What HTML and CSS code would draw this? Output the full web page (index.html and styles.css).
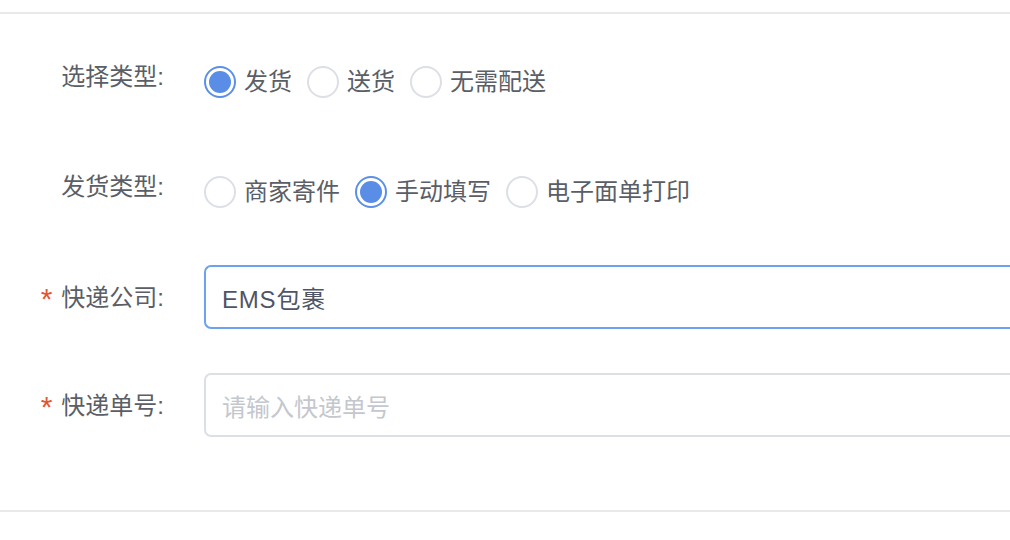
FILE: index.html
```html
<!DOCTYPE html>
<html lang="zh-CN">
<head>
<meta charset="utf-8">
<title>发货</title>
<link rel="stylesheet" href="styles.css">
</head>
<body>
<div class="page">
  <form class="form">
    <div class="form-item radio-row first">
      <label class="form-label">选择类型:</label>
      <div class="radio-group">
        <span class="radio checked"><span class="radio-circle"></span><span class="radio-text">发货</span></span>
        <span class="radio"><span class="radio-circle"></span><span class="radio-text">送货</span></span>
        <span class="radio"><span class="radio-circle"></span><span class="radio-text">无需配送</span></span>
      </div>
    </div>
    <div class="form-item radio-row second">
      <label class="form-label">发货类型:</label>
      <div class="radio-group">
        <span class="radio"><span class="radio-circle"></span><span class="radio-text">商家寄件</span></span>
        <span class="radio checked"><span class="radio-circle"></span><span class="radio-text">手动填写</span></span>
        <span class="radio"><span class="radio-circle"></span><span class="radio-text">电子面单打印</span></span>
      </div>
    </div>
    <div class="form-item input-row">
      <label class="form-label"><span class="required">*</span>快递公司:</label>
      <div class="input focused"><span class="input-value">EMS包裹</span></div>
    </div>
    <div class="form-item input-row last">
      <label class="form-label"><span class="required">*</span>快递单号:</label>
      <div class="input"><span class="input-placeholder">请输入快递单号</span></div>
    </div>
  </form>
</div>
</body>
</html>
```
FILE: styles.css
```css
html, body {
  margin: 0;
  padding: 0;
  background: #ffffff;
  overflow: hidden;
}
body {
  font-family: "Liberation Sans", "Noto Sans CJK SC", sans-serif;
  color: #5a5e66;
  width: 1010px;
  height: 540px;
}
.page {
  margin-top: 12px;
  border-top: 2px solid #e9e9e9;
  border-bottom: 2px solid #e9e9e9;
  height: 496px;
}
.form {
  padding-top: 34px;
}
.form-item {
  display: flex;
  align-items: center;
}
.form-label {
  width: 204px;
  box-sizing: border-box;
  padding-right: 40px;
  text-align: right;
  font-size: 24px;
  line-height: 32px;
  color: #5a5e66;
  flex-shrink: 0;
}
.radio-row {
  height: 68px;
}
.radio-row .form-label {
  padding-bottom: 10px;
}
.radio-row.first {
  margin-bottom: 42px;
}
.radio-row.second {
  margin-bottom: 39px;
}
.radio-group {
  display: flex;
  align-items: center;
}
.radio {
  display: flex;
  align-items: center;
  margin-right: 15px;
}
.radio-circle {
  width: 32px;
  height: 32px;
  box-sizing: border-box;
  border: 2px solid #dcdfe6;
  border-radius: 50%;
  margin-right: 8px;
  position: relative;
  flex-shrink: 0;
}
.radio.checked .radio-circle {
  border-color: #5b8fe8;
}
.radio.checked .radio-circle::after {
  content: "";
  position: absolute;
  left: 3px;
  top: 3px;
  width: 22px;
  height: 22px;
  border-radius: 50%;
  background: #5a8de6;
}
.radio-text {
  font-size: 24px;
  line-height: 32px;
  color: #5a5e66;
}
.input-row {
  height: 64px;
}
.input-row:not(.last) {
  margin-bottom: 44px;
}
.required {
  color: #e4572e;
  margin-right: 9px;
  font-size: 30px;
  position: relative;
  top: 3px;
}
.input {
  flex: 1;
  height: 64px;
  box-sizing: border-box;
  border: 2px solid #dcdfe6;
  border-right: none;
  border-radius: 7px 0 0 7px;
  padding-left: 16px;
  display: flex;
  align-items: center;
}
.input.focused {
  border-color: #6ea1ee;
}
.input-value {
  font-size: 24px;
  color: #4f5566;
  letter-spacing: 0.8px;
}
.input-placeholder {
  font-size: 24px;
  color: #c4c7ce;
}
```
